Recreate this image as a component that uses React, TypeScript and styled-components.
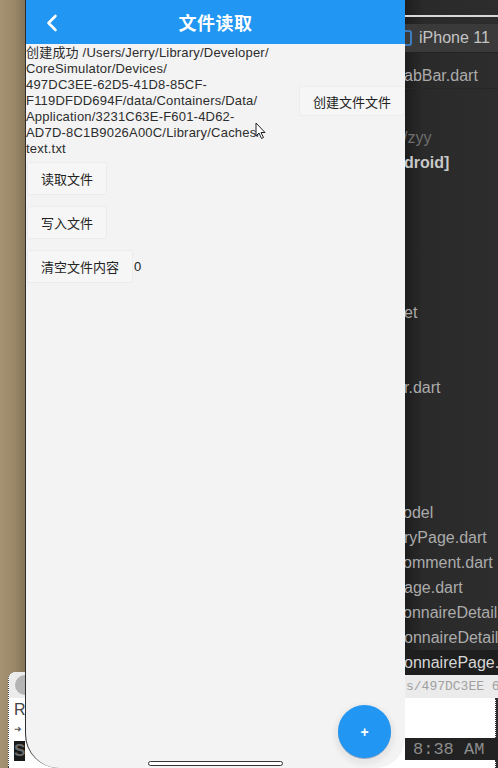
import styled, { createGlobalStyle } from "styled-components";

const GlobalStyle = createGlobalStyle`
  html, body {
    margin: 0;
    padding: 0;
    background: #ffffff;
    overflow: hidden;
  }
  * {
    box-sizing: border-box;
  }
`;

const SANS = `"Liberation Sans", "Noto Sans CJK SC", Arial, sans-serif`;
const MONO = `"Liberation Mono", "DejaVu Sans Mono", monospace`;

const pathLines = [
  "创建成功 /Users/Jerry/Library/Developer/",
  "CoreSimulator/Devices/",
  "497DC3EE-62D5-41D8-85CF-",
  "F119DFDD694F/data/Containers/Data/",
  "Application/3231C63E-F601-4D62-",
  "AD7D-8C1B9026A00C/Library/Caches/",
  "text.txt",
];

type FileRow = { text: string; tone?: "dim" | "bold" | "hi"; cut?: number };

// project tree rows on the IDE side, 25px apart
const fileRows: FileRow[] = [
  { text: "/zyy", tone: "dim", cut: 2 },
  { text: "droid]", tone: "bold", cut: 1 },
  { text: "" },
  { text: "" },
  { text: "" },
  { text: "" },
  { text: "" },
  { text: "et", cut: 1 },
  { text: "" },
  { text: "" },
  { text: "r.dart", cut: 1 },
  { text: "" },
  { text: "" },
  { text: "" },
  { text: "" },
  { text: "odel", cut: 2 },
  { text: "ryPage.dart", cut: 1 },
  { text: "omment.dart", cut: 2 },
  { text: "age.dart", cut: 1 },
  { text: "onnaireDetail", cut: 2 },
  { text: "onnaireDetail", cut: 1 },
  { text: "onnairePage.", tone: "hi", cut: 1 },
];

export default function App() {
  return (
    <>
      <GlobalStyle />
      <Screen>
        <Desk>
          <MiniWindow>
            <MiniTitle>
              <MiniDot />
            </MiniTitle>
            <MiniLetter>R</MiniLetter>
            <MiniArrow>➜</MiniArrow>
            <MiniBlock>S</MiniBlock>
          </MiniWindow>
        </Desk>

        <Phone>
          <AppBar>
            <BackCell>
              <svg width="14" height="18" viewBox="0 0 14 18">
                <path
                  d="M10.5 2 L3.5 9 L10.5 16"
                  fill="none"
                  stroke="#ffffff"
                  strokeWidth="2.6"
                  strokeLinecap="round"
                  strokeLinejoin="round"
                />
              </svg>
            </BackCell>
            <Title>文件读取</Title>
            <span />
          </AppBar>

          <Content>
            <InfoRow>
              <PathText>
                {pathLines.join("\n")}
                <Cursor width="11" height="18" viewBox="0 0 11 18">
                  <path
                    d="M1 1 L1 14 L4 11 L6.5 16.5 L8.5 15.5 L6 10.5 L10 10.5 Z"
                    fill="#ffffff"
                    stroke="#222222"
                    strokeWidth="1"
                    strokeLinejoin="round"
                  />
                </Cursor>
              </PathText>
              <FlatButton>创建文件文件</FlatButton>
            </InfoRow>

            <ButtonStack>
              <FlatButton $tall>读取文件</FlatButton>
              <FlatButton $tall>写入文件</FlatButton>
              <ClearRow>
                <FlatButton $tall>清空文件内容</FlatButton>
                <Count>0</Count>
              </ClearRow>
            </ButtonStack>
          </Content>

          <Footer>
            <FabRow>
              <Fab>+</Fab>
            </FabRow>
            <HomeBar />
          </Footer>
        </Phone>

        <Ide>
          <TopLine />
          <DeviceBar>
            <svg width="9" height="16" viewBox="0 0 9 16">
              <rect
                x="1"
                y="1"
                width="7"
                height="14"
                rx="1.5"
                fill="none"
                stroke="#3d8fe0"
                strokeWidth="1.6"
              />
            </svg>
            <DeviceName>iPhone 11</DeviceName>
          </DeviceBar>
          <TabRow>
            <FileName $cut={1}>abBar.dart</FileName>
          </TabRow>
          <TreeGap />
          {fileRows.map((row, i) => (
            <TreeRow key={i} $hi={row.tone === "hi"}>
              <FileName $tone={row.tone} $cut={row.cut ?? 0}>
                {row.text}
              </FileName>
            </TreeRow>
          ))}
          <ConsoleBar>s/497DC3EE 61</ConsoleBar>
          <ConsoleBlank />
          <ClockBar>8:38 AM</ClockBar>
          <ConsoleBlank $height={8} />
        </Ide>
      </Screen>
    </>
  );
}

const Screen = styled.div({
  display: "flex",
  width: "498px",
  height: "768px",
  overflow: "hidden",
  background: "#ffffff",
});

const Desk = styled.div({
  width: "25px",
  flexShrink: 0,
  display: "flex",
  flexDirection: "column",
  justifyContent: "flex-end",
  overflow: "hidden",
  background: "linear-gradient(to right, #a69372 0%, #9a8768 60%, #857457 100%)",
});

const MiniWindow = styled.div({
  marginLeft: "8px",
  width: "30px",
  height: "96px",
  background: "#ffffff",
  borderTopLeftRadius: "7px",
  borderLeft: "1px dotted #444",
  display: "flex",
  flexDirection: "column",
});

const MiniTitle = styled.div({
  height: "26px",
  display: "flex",
  alignItems: "center",
  paddingLeft: "6px",
  background: "#ececec",
  borderTopLeftRadius: "7px",
});

const MiniDot = styled.div({
  width: "20px",
  height: "20px",
  borderRadius: "50%",
  background: "#b4b4b4",
});

const MiniLetter = styled.div({
  marginTop: "4px",
  paddingLeft: "5px",
  font: `16px/16px ${SANS}`,
  color: "#444",
});

const MiniArrow = styled.div({
  marginTop: "7px",
  paddingLeft: "5px",
  font: `9px/9px ${SANS}`,
  color: "#555",
});

const MiniBlock = styled.div({
  marginTop: "7px",
  marginLeft: "5px",
  width: "14px",
  height: "20px",
  background: "#1a1a1a",
  color: "#6a6a6a",
  font: `bold 17px/20px ${SANS}`,
});

const Phone = styled.div({
  width: "380px",
  flexShrink: 0,
  height: "768px",
  display: "flex",
  flexDirection: "column",
  background: "#f3f3f3",
  borderLeft: "1px solid #2e2e2e",
  borderBottomLeftRadius: "34px",
  borderBottomRightRadius: "30px",
  overflow: "hidden",
  fontFamily: SANS,
});

const AppBar = styled.div({
  height: "44px",
  flexShrink: 0,
  display: "grid",
  gridTemplateColumns: "51px 1fr 51px",
  alignItems: "center",
  background: "#2196f3",
});

const BackCell = styled.div({
  display: "flex",
  justifyContent: "center",
  paddingTop: "2px",
});

const Title = styled.div({
  textAlign: "center",
  color: "#ffffff",
  fontSize: "18px",
  fontWeight: 600,
  letterSpacing: "0.5px",
});

const Content = styled.div({
  paddingTop: "1px",
  display: "flex",
  flexDirection: "column",
});

const InfoRow = styled.div({
  display: "flex",
  alignItems: "center",
  justifyContent: "space-between",
});

const PathText = styled.div({
  position: "relative",
  whiteSpace: "pre-line",
  fontSize: "13px",
  lineHeight: "16px",
  letterSpacing: "0.2px",
  color: "#2d2d2d",
});

const Cursor = styled.svg({
  position: "absolute",
  left: "229px",
  top: "77px",
});

const FlatButton = styled.div<{ $tall?: boolean }>(({ $tall }) => ({
  height: $tall ? "33px" : "30px",
  padding: "0 13px",
  display: "flex",
  alignItems: "center",
  fontSize: "13px",
  color: "#222",
  background: "#f6f6f6",
  border: "1px solid #ececec",
  borderRadius: "2px",
  whiteSpace: "nowrap",
}));

const ButtonStack = styled.div({
  marginTop: "5px",
  paddingLeft: "1px",
  display: "flex",
  flexDirection: "column",
  alignItems: "flex-start",
  gap: "11px",
});

const ClearRow = styled.div({
  display: "flex",
  alignItems: "center",
  gap: "1px",
});

const Count = styled.span({
  fontSize: "13px",
  color: "#222",
});

const Footer = styled.div({
  marginTop: "auto",
  display: "flex",
  flexDirection: "column",
  alignItems: "center",
  paddingBottom: "2px",
});

const FabRow = styled.div({
  alignSelf: "stretch",
  display: "flex",
  justifyContent: "flex-end",
  paddingRight: "14px",
});

const Fab = styled.div({
  width: "53px",
  height: "53px",
  borderRadius: "50%",
  background: "#2196f3",
  color: "#ffffff",
  display: "flex",
  alignItems: "center",
  justifyContent: "center",
  fontSize: "14px",
  fontWeight: 700,
  boxShadow: "0 3px 4px 4px rgba(0, 0, 0, 0.05), 0 1px 0 rgba(0, 60, 120, 0.35)",
});

const HomeBar = styled.div({
  marginTop: "3px",
  width: "135px",
  height: "5px",
  borderRadius: "3px",
  border: "1px solid #333",
  background: "#ffffff",
});

const Ide = styled.div({
  flex: 1,
  display: "flex",
  flexDirection: "column",
  overflow: "hidden",
  background: "linear-gradient(to right, #1d1d1d 0px, #2a2a2a 18px, #2d2d2d 100%)",
  fontFamily: SANS,
});

const TopLine = styled.div({
  marginTop: "15px",
  height: "2px",
  flexShrink: 0,
  background: "#d8d8d8",
});

const DeviceBar = styled.div({
  marginTop: "7px",
  height: "29px",
  flexShrink: 0,
  display: "flex",
  alignItems: "center",
  gap: "7px",
  paddingLeft: "1px",
  background: "#3a3a3a",
  borderBottom: "1px solid #232323",
  "& svg": {
    marginLeft: "-3px",
  },
});

const DeviceName = styled.span({
  fontSize: "16px",
  color: "#c4c4c4",
});

const TabRow = styled.div({
  marginTop: "10px",
  height: "26px",
  flexShrink: 0,
  display: "flex",
  alignItems: "center",
  borderBottom: "1px solid #262626",
});

const TreeGap = styled.div({
  height: "36px",
  flexShrink: 0,
});

const TreeRow = styled.div<{ $hi?: boolean }>(({ $hi }) => ({
  height: "25px",
  flexShrink: 0,
  display: "flex",
  alignItems: "center",
  background: $hi ? "#1e1e1e" : "transparent",
}));

const FileName = styled.span<{ $tone?: "dim" | "bold" | "hi"; $cut?: number }>(
  ({ $tone, $cut }) => ({
    marginLeft: `${-($cut ?? 0)}px`,
    whiteSpace: "nowrap",
    fontSize: "16px",
    fontWeight: $tone === "bold" ? 700 : 400,
    color:
      $tone === "dim"
        ? "#6e6e6e"
        : $tone === "bold"
        ? "#c8c8c8"
        : $tone === "hi"
        ? "#d6d6d6"
        : "#ababab",
  })
);

const ConsoleBar = styled.div({
  height: "23px",
  flexShrink: 0,
  display: "flex",
  alignItems: "center",
  paddingLeft: "1px",
  background: "#ebebeb",
  color: "#a0a0a0",
  font: `13px ${MONO}`,
  whiteSpace: "nowrap",
});

const ConsoleBlank = styled.div<{ $height?: number }>(({ $height }) => ({
  flex: $height ? `0 0 ${$height}px` : 1,
  background: "#ffffff",
  borderRight: "1px dotted #333",
  marginRight: "2px",
}));

const ClockBar = styled.div({
  height: "22px",
  flexShrink: 0,
  display: "flex",
  alignItems: "center",
  paddingLeft: "8px",
  background: "#222222",
  color: "#8d8d8d",
  font: `17px ${MONO}`,
  whiteSpace: "nowrap",
});
